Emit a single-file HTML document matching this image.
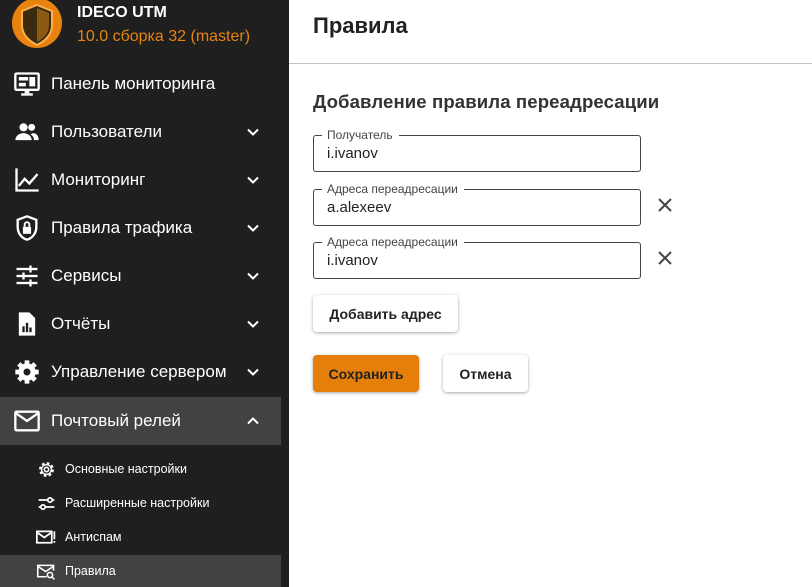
<!DOCTYPE html>
<html><head><meta charset="utf-8"><style>
*{box-sizing:border-box;margin:0;padding:0}
body{width:812px;height:587px;overflow:hidden;font-family:"Liberation Sans",sans-serif;background:#fff;position:relative}
#sb{position:absolute;left:0;top:0;width:289px;height:587px;background:#1f1f1f;color:#fff}
.it{position:absolute;left:0;width:281px;height:48px;display:flex;align-items:center;font-size:17px}
.it svg.ic{position:absolute;left:13px;width:28px;height:28px}
.it span{position:absolute;left:51px}
.chev{position:absolute;left:246px;width:14px;height:14px}
.sub{position:absolute;left:0;width:281px;height:34px;display:flex;align-items:center;font-size:12.5px}
.sub span{position:absolute;left:65px}
.sub svg{position:absolute;left:36px;width:21px;height:21px}
.fld{position:absolute;left:313px;width:328px;border:1px solid #444;border-radius:3px;height:37px}
.fld label{position:absolute;left:8px;top:-8px;background:#fff;padding:0 6px 0 5px;font-size:12px;color:#444;line-height:14px}
.fld div{position:absolute;left:13px;top:9px;font-size:15px;color:#222}
.x{position:absolute;left:656px;width:18px;height:18px}
.btn{position:absolute;height:37px;border-radius:4px;box-shadow:0 1px 3px rgba(0,0,0,.35);font-weight:bold;font-size:14px;display:flex;align-items:center;justify-content:center;color:#222;background:#fff}
</style></head><body>
<div id="sb">
<svg style="position:absolute;left:0;top:0" width="70" height="60"><circle cx="37" cy="23" r="25" fill="#e8830f"/><path d="M37 5 L52 11 V25 C52 35 45 41 37 45 C29 41 22 35 22 25 V11 Z" fill="#3a2a10" stroke="#ffb04a" stroke-width="2"/><path d="M37 8 V42 C44 38 49 33 49 25 V13 Z" fill="#8a5a10"/></svg>
<div style="position:absolute;left:77px;top:4px;font-size:16px;font-weight:bold">IDECO UTM</div>
<div style="position:absolute;left:77px;top:28px;font-size:16px;color:#e8830f">10.0 сборка 32 (master)</div>

<div class="it" style="top:60px"><svg class="ic" viewBox="0 0 24 24"><rect x="2" y="3" width="20" height="14" rx="1" fill="none" stroke="#fff" stroke-width="2"/><rect x="5" y="6" width="8" height="3" fill="#fff"/><rect x="5" y="11" width="6" height="3" fill="#fff"/><rect x="14" y="6" width="5" height="8" fill="#fff"/><rect x="10" y="17" width="4" height="3" fill="#fff"/><rect x="7" y="20" width="10" height="2" fill="#fff"/></svg><span>Панель мониторинга</span></div>
<div class="it" style="top:108px"><svg class="ic" viewBox="0 0 24 24" fill="#fff"><circle cx="9" cy="8" r="3.5"/><circle cx="16" cy="8" r="3"/><path d="M2 19c0-4 4-6 7-6s7 2 7 6z"/><path d="M17 13c3 0 5 2 5 6h-4c0-2-1-4-3-5z"/></svg><span>Пользователи</span><svg class="chev" viewBox="0 0 14 14"><path d="M2 4.5l5 5 5-5" fill="none" stroke="#fff" stroke-width="2"/></svg></div>
<div class="it" style="top:156px"><svg class="ic" viewBox="0 0 24 24" fill="none" stroke="#fff" stroke-width="2"><path d="M3 2v19h19"/><path d="M5 17l5-6 4 4 7-8"/></svg><span>Мониторинг</span><svg class="chev" viewBox="0 0 14 14"><path d="M2 4.5l5 5 5-5" fill="none" stroke="#fff" stroke-width="2"/></svg></div>
<div class="it" style="top:204px"><svg class="ic" viewBox="0 0 24 24"><path d="M12 2l8 3v6c0 6-4 10-8 11-4-1-8-5-8-11V5z" fill="none" stroke="#fff" stroke-width="2"/><rect x="8.5" y="11" width="7" height="6" fill="#fff"/><path d="M10 11V9a2 2 0 014 0v2" fill="none" stroke="#fff" stroke-width="1.6"/></svg><span>Правила трафика</span><svg class="chev" viewBox="0 0 14 14"><path d="M2 4.5l5 5 5-5" fill="none" stroke="#fff" stroke-width="2"/></svg></div>
<div class="it" style="top:252px"><svg class="ic" viewBox="0 0 24 24" fill="#fff"><rect x="3" y="5" width="18" height="2"/><rect x="3" y="11" width="18" height="2"/><rect x="3" y="17" width="18" height="2"/><rect x="14" y="3" width="2" height="6"/><rect x="8" y="9" width="2" height="6"/><rect x="14" y="15" width="2" height="6"/></svg><span>Сервисы</span><svg class="chev" viewBox="0 0 14 14"><path d="M2 4.5l5 5 5-5" fill="none" stroke="#fff" stroke-width="2"/></svg></div>
<div class="it" style="top:300px"><svg class="ic" viewBox="0 0 24 24"><path d="M5 2h9l5 5v15H5z" fill="#fff"/><rect x="8" y="14" width="2" height="5" fill="#1f1f1f"/><rect x="11" y="11" width="2" height="8" fill="#1f1f1f"/><rect x="14" y="15" width="2" height="4" fill="#1f1f1f"/></svg><span>Отчёты</span><svg class="chev" viewBox="0 0 14 14"><path d="M2 4.5l5 5 5-5" fill="none" stroke="#fff" stroke-width="2"/></svg></div>
<div class="it" style="top:348px"><svg class="ic" viewBox="0 0 24 24"><circle cx="12" cy="12" r="7.5" fill="#fff"/><g stroke="#fff" stroke-width="4"><path d="M12 2v20M2 12h20M5 5l14 14M19 5L5 19"/></g><circle cx="12" cy="12" r="3" fill="#1f1f1f"/></svg><span>Управление сервером</span><svg class="chev" viewBox="0 0 14 14"><path d="M2 4.5l5 5 5-5" fill="none" stroke="#fff" stroke-width="2"/></svg></div>
<div class="it" style="top:397px;background:#424242"><svg class="ic" viewBox="0 0 24 24" fill="none" stroke="#fff" stroke-width="2"><rect x="2" y="4" width="20" height="16" rx="1"/><path d="M2 5l10 7 10-7"/></svg><span>Почтовый релей</span><svg class="chev" viewBox="0 0 14 14"><path d="M2 9.5l5-5 5 5" fill="none" stroke="#fff" stroke-width="2"/></svg></div>

<div class="sub" style="top:452px"><svg viewBox="0 0 24 24"><circle cx="12" cy="12" r="7" fill="none" stroke="#fff" stroke-width="3" stroke-dasharray="3 2.5"/><circle cx="12" cy="12" r="5.5" fill="none" stroke="#fff" stroke-width="1.5"/><circle cx="12" cy="12" r="2.5" fill="none" stroke="#fff" stroke-width="1.8"/></svg><span>Основные настройки</span></div>
<div class="sub" style="top:486px"><svg viewBox="0 0 24 24" fill="none" stroke="#fff" stroke-width="2"><path d="M3 8h10M19 8h2M3 16h2M11 16h10"/><circle cx="16" cy="8" r="2.5"/><circle cx="8" cy="16" r="2.5"/></svg><span>Расширенные настройки</span></div>
<div class="sub" style="top:520px"><svg viewBox="0 0 24 24" fill="none" stroke="#fff" stroke-width="2"><rect x="1" y="5" width="17" height="13"/><path d="M1 6l8.5 6 8.5-6M21 5v9M21 16v2"/></svg><span>Антиспам</span></div>
<div class="sub" style="top:555px;height:32px;background:#424242"><svg viewBox="0 0 24 24" fill="none" stroke="#fff" stroke-width="1.8"><path d="M12 18H2V5h18v6"/><path d="M2 6l9 6 9-6"/><circle cx="16" cy="16" r="3"/><path d="M18 18l3 3"/></svg><span>Правила</span></div>
</div>

<div style="position:absolute;left:313px;top:13px;font-size:22px;font-weight:bold;color:#222">Правила</div>
<div style="position:absolute;left:289px;top:63px;width:523px;height:1px;background:#c4c4c4"></div>
<div style="position:absolute;left:313px;top:91px;font-size:18.6px;font-weight:bold;color:#333;letter-spacing:0.1px">Добавление правила переадресации</div>

<div class="fld" style="top:135px"><label>Получатель</label><div>i.ivanov</div></div>
<div class="fld" style="top:189px"><label>Адреса переадресации</label><div>a.alexeev</div></div>
<svg class="x" style="top:196px" viewBox="0 0 18 18"><path d="M3 3l12 12M15 3L3 15" stroke="#444" stroke-width="2"/></svg>
<div class="fld" style="top:242px"><label>Адреса переадресации</label><div>i.ivanov</div></div>
<svg class="x" style="top:249px" viewBox="0 0 18 18"><path d="M3 3l12 12M15 3L3 15" stroke="#444" stroke-width="2"/></svg>

<div class="btn" style="left:313px;top:295px;width:145px">Добавить адрес</div>
<div class="btn" style="left:313px;top:355px;width:106px;background:#e67e0a">Сохранить</div>
<div class="btn" style="left:443px;top:355px;width:85px">Отмена</div>
</body></html>
